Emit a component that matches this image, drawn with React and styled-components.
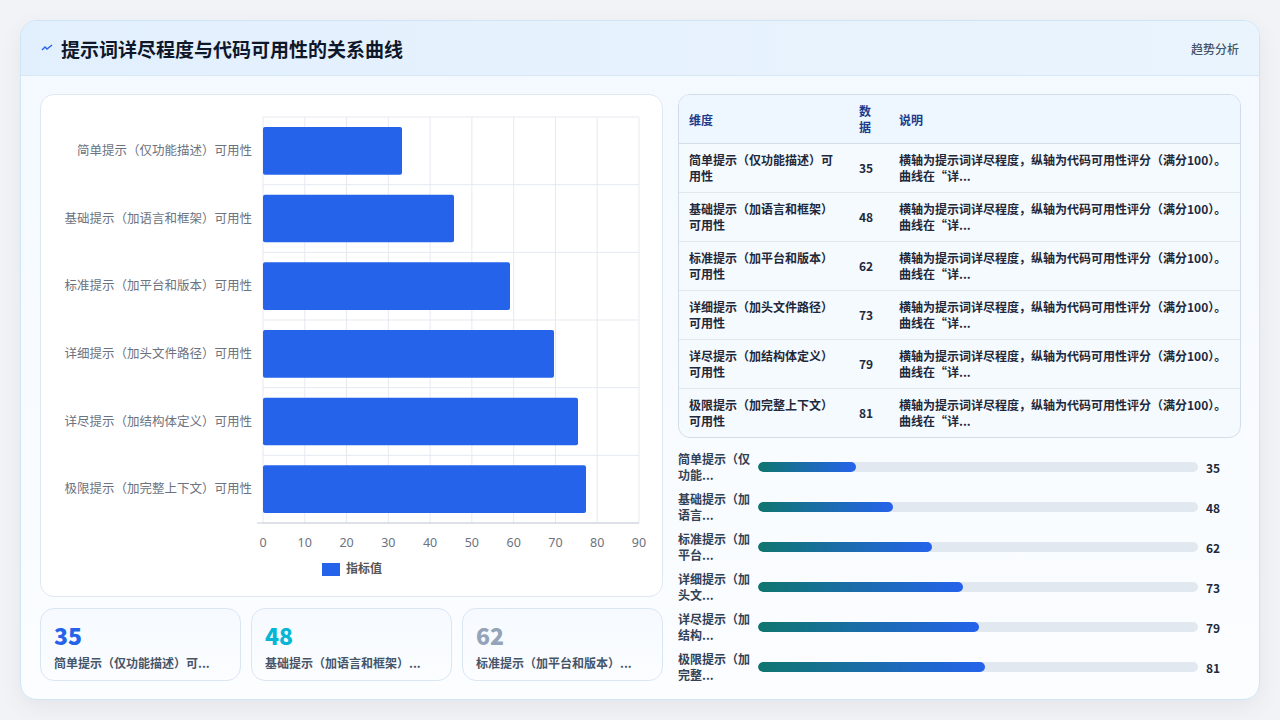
import React from "react";
import styled, { createGlobalStyle } from "styled-components";

const Global = createGlobalStyle`
  html,body{margin:0;padding:0;background:#f1f3f6;font-family:"Noto Sans CJK SC","Noto Sans",sans-serif;}
`;

const data = [
  { n: "简单提示（仅功能描述）可用性", a: "简单提示（仅功能描述）可", b: "用性", s1: "简单提示（仅", s2: "功能...", v: 35, px: 139 },
  { n: "基础提示（加语言和框架）可用性", a: "基础提示（加语言和框架）", b: "可用性", s1: "基础提示（加", s2: "语言...", v: 48, px: 191 },
  { n: "标准提示（加平台和版本）可用性", a: "标准提示（加平台和版本）", b: "可用性", s1: "标准提示（加", s2: "平台...", v: 62, px: 247 },
  { n: "详细提示（加头文件路径）可用性", a: "详细提示（加头文件路径）", b: "可用性", s1: "详细提示（加", s2: "头文...", v: 73, px: 291 },
  { n: "详尽提示（加结构体定义）可用性", a: "详尽提示（加结构体定义）", b: "可用性", s1: "详尽提示（加", s2: "结构...", v: 79, px: 315 },
  { n: "极限提示（加完整上下文）可用性", a: "极限提示（加完整上下文）", b: "可用性", s1: "极限提示（加", s2: "完整...", v: 81, px: 323 },
];

const Card = styled.div`
  position:absolute; left:20px; top:20px; width:1238px; height:678px;
  background:linear-gradient(180deg,#f3f9ff,#fbfdff);
  border:1px solid #cfe4f5; border-radius:16px; overflow:hidden;
  box-shadow:0 8px 24px rgba(0,0,0,0.06);
  display:flex; flex-direction:column;
`;
const Header = styled.div`
  height:54px; flex:none; display:flex; align-items:center; justify-content:space-between;
  padding:0 20px; background:linear-gradient(90deg,#e2effd,#eaf4fd);
  border-bottom:1px solid #d6e8f8;
`;
const Title = styled.h1`
  margin:0; font-size:19px; font-weight:700; color:#0f172a; display:flex; align-items:center; gap:8px;
`;
const Tag = styled.span`font-size:12px; color:#475569; font-weight:500;`;
const Body = styled.div`
  flex:1; display:grid; grid-template-columns:623px 563px; gap:15px; padding:18px 19px 0 19px; min-height:0;
`;
const Col = styled.div`display:flex; flex-direction:column; gap:11px; min-height:0;`;
const Panel = styled.div`
  height:503px; background:#fff; border:1px solid #dfe7f1; border-radius:14px; box-sizing:border-box;
`;
const Stats = styled.div`display:grid; grid-template-columns:repeat(3,1fr); gap:10px;`;
const Stat = styled.div`
  height:73px; box-sizing:border-box; padding:12px 13px; border:1px solid #dbe6f3; border-radius:14px;
  background:linear-gradient(180deg,#f6faff,#fbfdff);
`;
const StatNum = styled.div`font-size:23px; font-weight:800; color:${p => p.c}; line-height:28px;`;
const StatLab = styled.div`font-size:12px; font-weight:600; color:#475569; margin-top:5px;`;
const Table = styled.table`
  width:100%; border-collapse:separate; border-spacing:0; border:1px solid #d3dde9; border-radius:12px; overflow:hidden;
  font-size:12px; background:#f5faff; flex:none;
  th{ text-align:left; color:#1e3a8a; font-weight:700; height:48px; padding:0 10px; background:#eef6ff; border-bottom:1px solid #d3dde9; }
  td{ color:#1e293b; font-weight:600; height:48px; padding:0 10px; line-height:16px; border-bottom:1px solid #e2e8f0; }
  tr:last-child td{border-bottom:none;}
`;
const Bars = styled.div`display:flex; flex-direction:column; gap:8px; margin-top:2px;`;
const BarRow = styled.div`display:flex; align-items:center; height:32px;`;
const BarLab = styled.div`width:80px; font-size:12px; font-weight:600; color:#334155; line-height:16px;`;
const Track = styled.div`flex:1; height:10px; background:#e2e8f0; border-radius:5px; margin-right:8px; overflow:hidden;`;
const Fill = styled.div`height:100%; border-radius:5px; background:linear-gradient(90deg,#0f766e,#2563eb);`;
const BarVal = styled.div`width:35px; font-size:12px; font-weight:700; color:#1e293b;`;
const Chips = styled.div`display:flex; gap:10px; margin-top:6px;`;
const Chip = styled.div`width:${p => p.w}px; height:24px; border:1px solid #dbe6f3; border-radius:12px; background:#fff;`;

function Chart() {
  const x0 = 222, y0 = 22, w = 376, h = 406, rh = h / 6;
  return (
    <svg width="621" height="501" style={{ display: "block" }}>
      {Array.from({ length: 10 }).map((_, i) => (
        <line key={i} x1={x0 + (i * w) / 9} x2={x0 + (i * w) / 9} y1={y0} y2={y0 + h} stroke="#e5e9f0" />
      ))}
      {Array.from({ length: 7 }).map((_, i) => (
        <line key={i} x1={x0} x2={x0 + w} y1={y0 + i * rh} y2={y0 + i * rh} stroke="#e5e9f0" />
      ))}
      <line x1={x0 - 6} x2={x0 + w} y1={y0 + h} y2={y0 + h} stroke="#c7ccd6" />
      {data.map((d, i) => (
        <g key={i}>
          <rect x={x0} y={y0 + i * rh + 10} width={d.px} height={rh - 20} rx="2" fill="#2563eb" />
          <text x={x0 - 11} y={y0 + i * rh + rh / 2 + 4} textAnchor="end" fontSize="12.5" fill="#6b7280">{d.n}</text>
        </g>
      ))}
      {Array.from({ length: 10 }).map((_, i) => (
        <text key={i} x={x0 + (i * w) / 9} y={y0 + h + 24} textAnchor="middle" fontSize="12.5" fill="#6b7280" fontFamily="Noto Sans">{i * 10}</text>
      ))}
      <rect x="281" y="468" width="18" height="13" fill="#2563eb" />
      <text x="305" y="478" fontSize="12" fill="#555" fontWeight="600">指标值</text>
    </svg>
  );
}

export default function App() {
  return (
    <>
      <Global />
      <Card>
        <Header>
          <Title>
            <svg width="12" height="12" viewBox="0 0 12 12"><path d="M1 8 L4 5 L6 7 L11 3" stroke="#2563eb" strokeWidth="1.4" fill="none" /></svg>
            提示词详尽程度与代码可用性的关系曲线
          </Title>
          <Tag>趋势分析</Tag>
        </Header>
        <Body>
          <Col>
            <Panel><Chart /></Panel>
            <Stats>
              <Stat><StatNum c="#2563eb">35</StatNum><StatLab>简单提示（仅功能描述）可...</StatLab></Stat>
              <Stat><StatNum c="#06b6d4">48</StatNum><StatLab>基础提示（加语言和框架）...</StatLab></Stat>
              <Stat><StatNum c="#94a3b8">62</StatNum><StatLab>标准提示（加平台和版本）...</StatLab></Stat>
            </Stats>
          </Col>
          <Col>
            <Table>
              <thead>
                <tr><th style={{ width: 150 }}>维度</th><th style={{ width: 20, lineHeight: "16px" }}>数<br />据</th><th>说明</th></tr>
              </thead>
              <tbody>
                {data.map((d, i) => (
                  <tr key={i}>
                    <td>{d.a}<br />{d.b}</td>
                    <td>{d.v}</td>
                    <td>横轴为提示词详尽程度，纵轴为代码可用性评分（满分100）。<br />曲线在“详...</td>
                  </tr>
                ))}
              </tbody>
            </Table>
            <Bars>
              {data.map((d, i) => (
                <BarRow key={i}>
                  <BarLab>{d.s1}<br />{d.s2}</BarLab>
                  <Track><Fill style={{ width: `${(d.v / 157) * 100}%` }} /></Track>
                  <BarVal>{d.v}</BarVal>
                </BarRow>
              ))}
            </Bars>
            <Chips><Chip w={72} /><Chip w={52} /><Chip w={54} /><Chip w={72} /></Chips>
          </Col>
        </Body>
      </Card>
    </>
  );
}
